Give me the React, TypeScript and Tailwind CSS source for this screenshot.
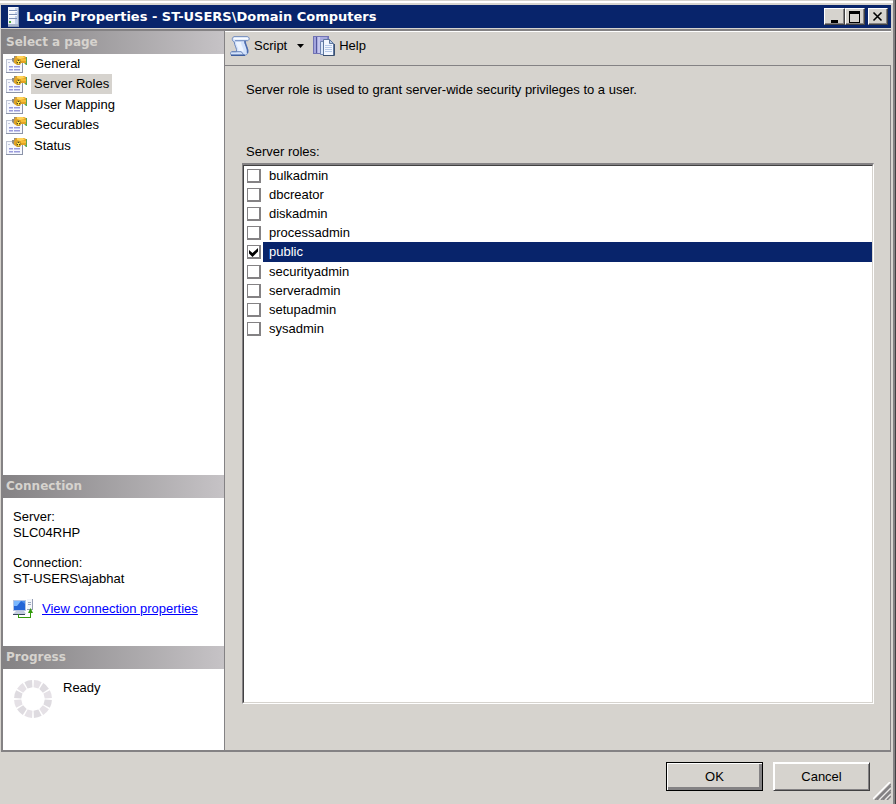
import { useState } from 'react';

const pages = ['General', 'Server Roles', 'User Mapping', 'Securables', 'Status'];

const roles = [
  'bulkadmin',
  'dbcreator',
  'diskadmin',
  'processadmin',
  'public',
  'securityadmin',
  'serveradmin',
  'setupadmin',
  'sysadmin',
];

function ServerIcon() {
  return (
    <svg className="w-4 h-5 shrink-0" viewBox="0 0 16 20" shapeRendering="crispEdges" aria-hidden="true">
      <path d="M3 0h11v20H3z" fill="#8e9cb4" />
      <path d="M3 0h10v19H3z" fill="#f1f4fa" />
      <path d="M10 1h3v17h-3z" fill="#c3d1ec" />
      <path d="M4 3h8v1H4zM4 7h8v1H4zM4 11h8v1H4z" fill="#7d90b5" />
      <path d="M4 4h8v1H4zM4 8h8v1H4z" fill="#fff" />
      <path d="M4 14h2v2H4z" fill="#4fae3c" />
      <path d="M3 17h10v2H3z" fill="#a9b6ce" />
    </svg>
  );
}

function PageIcon() {
  return (
    <svg className="w-[22px] h-[18px] shrink-0" viewBox="0 0 22 18" aria-hidden="true">
      <path d="M0 4h17v14H0z" fill="#8b93a8" />
      <path d="M1 5h15v12H1z" fill="#f6f8fe" />
      <path d="M0 4h1v13H0zM0 4h8v1H0z" fill="#bdc3d2" />
      <path d="M2 7h2v1H2z" fill="#c3c9dd" />
      <path d="M3 11h4v1.500H3zM8 11h6v1.500H8zM3 14h4v1.500H3zM8 14h6v1.500H8z" fill="#9a9bdb" />
      <path d="M6 6V3h2V1h4v3L8 8z" fill="#8f8d86" />
      <path d="M19 2h2v8h-1l-2-2z" fill="#5fa552" />
      <path d="M9 2l2-1h7l2 1v6h-5l-1 2h-3L8 8V5z" fill="#e3a323" />
      <path d="M11 1h6l2 2-5 1-3-1z" fill="#ffd45c" />
      <path d="M15 4h5v2h-5z" fill="#f5bd37" />
      <path d="M12.500 4l2.500 3-2.500 3-2.500-3z" fill="#ffe34d" stroke="#8a7126" strokeWidth=".7" />
      <path d="M12 5h1v1h-1zM11 7h1v1h-1zM13 7h1v1h-1z" fill="#4f3f14" />
    </svg>
  );
}

function ScriptIcon() {
  return (
    <svg className="w-5 h-5 shrink-0" viewBox="0 0 20 20" aria-hidden="true">
      <path
        d="M4 .7h13c2.500 0 3 3.300.5 4H15c-.5 2 .5 3.500 1.500 5.500 1.200 2.400 2 4.500 1 7-.5 1.400-1.400 2-3 2H2c-2 0-2-3.500 0-3.500h4.500c.8-3-2.300-6.500-2.300-10C2 5.500 1.400 1.500 4 .7z"
        fill="#d3e2fb"
        stroke="#6b86bb"
      />
      <path d="M4 1.500h13c1.500 0 1.500 1.500 1 2H5C4 3.500 3 3 4 1.500z" fill="#fafcff" />
      <path d="M6 6h5c0 4 3 6 2.500 9.500H8.500C9 12 6 9 6 6z" fill="#edf4ff" />
      <path d="M15 4.700H5M2 15.700h9c1.500.5 1.500 2.500 3 3.500" fill="none" stroke="#6b86bb" />
      <path d="M15 5c-.5 3 3.500 7 2.500 12" fill="none" stroke="#4b6bae" strokeWidth="1.500" />
      <path d="M1 19.300h14" stroke="#3d5d9e" strokeWidth="1.400" />
    </svg>
  );
}

function HelpIcon() {
  return (
    <svg className="w-[22px] h-5 shrink-0" viewBox="0 0 22 20" aria-hidden="true">
      <path d="M0 0h16v18H0z" fill="#7173b5" />
      <path d="M1 1h2v16H1z" fill="#a2a3dc" />
      <path d="M3 1h1v16H3z" fill="#54579c" />
      <path d="M4 1h11v16H4z" fill="#a9abdf" />
      <path d="M5 1h2v16H5z" fill="#c6c7ee" />
      <path d="M14 1h1v10h-1z" fill="#8587c5" />
      <path d="M7.500 5.500h5v13h-5z" fill="#dce8fb" stroke="#7086b3" />
      <path d="M10.500 3.500h6l4 4v12h-10z" fill="#f1f6ff" stroke="#5f789f" />
      <path d="M16.500 3.500v4h4z" fill="#b6cae8" stroke="#5f789f" />
      <path d="M12 9.500h7M12 11.500h7M12 13.500h7M12 15.500h7" stroke="#b4c8e8" />
      <path d="M10 19.500h11.500V8" fill="none" stroke="#3a5070" />
    </svg>
  );
}

function ConnectionIcon() {
  return (
    <svg className="w-5 h-5 shrink-0" viewBox="0 0 20 20" aria-hidden="true">
      <path d="M0 1h13v11H0z" fill="#b5c4e4" />
      <path d="M1 2h11v9H1z" fill="#2464d6" />
      <path d="M1 2h7l-4 5H1z" fill="#78b6ff" />
      <path d="M8 2h4v3z" fill="#4b8cec" />
      <path d="M3 12h8l2 3H0z" fill="#c5cde0" />
      <path d="M0 15h12v1H0z" fill="#37455f" />
      <path d="M14 0h6v11h-6z" fill="#959eb4" />
      <path d="M14 0h5v10h-5z" fill="#f3f5fa" />
      <path d="M15 3h3v1h-3zM15 5h3v1h-3z" fill="#9ba6bd" />
      <path d="M5 15h1v3h11v-5h1v6H5z" fill="#329a0b" />
      <path d="M17.500 9l2.500 5h-5z" fill="#329a0b" />
    </svg>
  );
}

function ProgressRing() {
  const angles = [15, 45, 75, 105, 135, 165, 195, 225, 255, 285, 315, 345];
  return (
    <svg className="w-[38px] h-[38px] shrink-0" viewBox="-19 -19 38 38" aria-hidden="true">
      {angles.map((angle, i) => (
        <path
          key={angle}
          d="M-4-18.500q4-1 8 0l-1.500 7h-5z"
          transform={`rotate(${angle})`}
          fill={i % 2 ? '#dedbe0' : '#e5e1e6'}
        />
      ))}
    </svg>
  );
}

function SectionHeader({ title }: { title: string }) {
  return (
    <h2 className="h-[23px] shrink-0 px-[3px] pb-px flex items-center bg-linear-to-r from-[#848284] to-[#c6c3c6] text-[#d6d3ce] font-['DejaVu_Sans',sans-serif] text-xs font-bold">
      {title}
    </h2>
  );
}

const captionButton =
  'h-[17px] flex items-center justify-center bg-[#d6d3ce] border border-t-white border-l-white border-r-[#424142] border-b-[#424142] shadow-[inset_-1px_-1px_0_#848284]';

export default function App() {
  const [page, setPage] = useState('Server Roles');
  const [selected, setSelected] = useState('public');
  const [granted, setGranted] = useState<string[]>(['public']);

  const toggle = (role: string) => {
    setSelected(role);
    setGranted(granted.includes(role) ? granted.filter((r) => r !== role) : [...granted, role]);
  };

  return (
    <div className="min-h-screen flex flex-col bg-[#d6d3ce] border-r border-[#424142] font-['Liberation_Sans',sans-serif] text-[13px] leading-4 text-black">
      <div className="flex-1 flex flex-col pt-px border-r-2 border-[#848284]">
        <div className="h-0.5 bg-white" />
        <div className="flex-1 flex flex-col pl-px pr-0.5 pt-0.5">
          {/* Title bar */}
          <header className="h-[23px] shrink-0 flex items-center pl-1 pr-[3px] bg-[#08246b] text-white">
            <ServerIcon />
            <h1 className="flex-1 pl-[5px] font-['DejaVu_Sans',sans-serif] text-[13px] font-bold whitespace-nowrap">
              Login Properties - ST-USERS\Domain Computers
            </h1>
            <div className="flex">
              <button className={`${captionButton} w-[21px]`} aria-label="Minimize">
                <svg className="w-3 h-3" viewBox="0 0 12 12" shapeRendering="crispEdges">
                  <path d="M2 9h7v3H2z" />
                </svg>
              </button>
              <button className={`${captionButton} w-5`} aria-label="Maximize">
                <svg className="w-3 h-3" viewBox="0 0 12 12" shapeRendering="crispEdges">
                  <path d="M0 0h11v12H0zM1 3v8h9V3z" fillRule="evenodd" />
                </svg>
              </button>
              <button className={`${captionButton} w-5 ml-[3px]`} aria-label="Close">
                <svg className="w-3 h-3" viewBox="0 0 12 12">
                  <path d="M1.500 1.500l8 8M9.500 1.500l-8 8" stroke="#000" strokeWidth="1.600" />
                </svg>
              </button>
            </div>
          </header>

          <div className="flex-1 flex mt-px border-t-2 border-l-2 border-b-2 border-[#848284]">
            {/* Sidebar */}
            <aside className="w-[222px] shrink-0 flex flex-col bg-white border-r border-[#848284]">
              <SectionHeader title="Select a page" />
              <ul className="flex-1">
                {pages.map((name) => (
                  <li key={name} className="h-5 even:h-[21px] flex items-start">
                    <button className="flex items-center pl-[3px] gap-[3px]" onClick={() => setPage(name)}>
                      <PageIcon />
                      <span className={`h-5 px-[3px] flex items-center ${page === name ? 'bg-[#d6d3ce]' : ''}`}>
                        {name}
                      </span>
                    </button>
                  </li>
                ))}
              </ul>

              <SectionHeader title="Connection" />
              <div className="h-[148px] px-2.5 pt-[11px]">
                <p>Server:</p>
                <p>SLC04RHP</p>
                <p className="mt-3.5">Connection:</p>
                <p>ST-USERS\ajabhat</p>
                <a href="#" className="mt-3 flex items-center gap-[9px] text-[#0000ff] underline">
                  <ConnectionIcon />
                  View connection properties
                </a>
              </div>

              <SectionHeader title="Progress" />
              <div className="h-[81px] flex gap-[11px] px-[11px] pt-[11px]">
                <ProgressRing />
                <p>Ready</p>
              </div>
            </aside>

            {/* Selected page */}
            <main className="flex-1 flex flex-col border-t border-t-white">
              <div className="h-[33px] flex items-center pl-[5px] pb-1.5">
                <button className="flex items-center gap-1">
                  <ScriptIcon />
                  Script
                  <svg className="w-2 h-1 ml-1.5" viewBox="0 0 8 4" aria-hidden="true">
                    <path d="M0 0h7L3.500 4z" />
                  </svg>
                </button>
                <button className="ml-2 flex items-center gap-1">
                  <HelpIcon />
                  Help
                </button>
              </div>
              <div className="flex-1 flex flex-col border-t border-r border-[#848284] pl-[17px] pr-4 pt-4 pb-[46px]">
                <p className="px-1">Server role is used to grant server-wide security privileges to a user.</p>
                <p className="px-1 mt-[46px]">Server roles:</p>
                <div className="flex-1 mt-[3px] border-t-2 border-l border-t-[#848284] border-l-[#848284] border-r border-b border-r-white border-b-white">
                  <ul className="h-full bg-white border border-t-[#424142] border-l-[#424142] border-r-[#d6d3ce] border-b-[#d6d3ce]">
                    {roles.map((role) => (
                      <li key={role} className={`flex items-center pl-[3px] ${selected === role ? 'h-5' : 'h-[19px]'}`}>
                        <div className="relative w-3.5 h-3.5 mr-0.5">
                          <input
                            type="checkbox"
                            id={role}
                            checked={granted.includes(role)}
                            onChange={() => toggle(role)}
                            className="block appearance-none w-3.5 h-3.5 bg-white border border-r-2 border-b-2 border-[#848284]"
                          />
                          {granted.includes(role) && (
                            <svg className="absolute inset-0 pointer-events-none" viewBox="0 0 14 14" aria-hidden="true">
                              <path d="M2 5l3.500 3L11 3v3.500L5.500 12 2 8.500z" />
                            </svg>
                          )}
                        </div>
                        <label
                          htmlFor={role}
                          className={`flex-1 h-full px-1.5 flex items-center ${selected === role ? 'bg-[#08246b] text-white' : ''}`}
                        >
                          {role}
                        </label>
                      </li>
                    ))}
                  </ul>
                </div>
              </div>
            </main>
          </div>

          {/* Dialog buttons */}
          <footer className="relative h-[52px] shrink-0 flex justify-end gap-2.5 pt-2.5 pr-[21px]">
            <button className="w-[97px] h-[29px] border border-black shadow-[inset_1px_1px_0_#fff,inset_-3px_-3px_0_#848284]">
              OK
            </button>
            <button className="w-[97px] h-[29px] border border-t-white border-l-white border-r-[#424142] border-b-[#424142] shadow-[inset_1px_1px_0_#fff,inset_-1px_-1px_0_#848284]">
              Cancel
            </button>
            <svg className="absolute right-0 bottom-1 w-[18px] h-[18px]" viewBox="0 0 18 18" aria-hidden="true">
              <path d="M0 17L17 0M6 17L17 6M12 17l5-5" stroke="#fff" strokeWidth="1.500" />
              <path d="M2 18L18 2M4 18L18 4M8 18L18 8M10 18l8-8M14 18l4-4" stroke="#848284" strokeWidth="1.500" />
            </svg>
          </footer>
        </div>
      </div>
    </div>
  );
}
